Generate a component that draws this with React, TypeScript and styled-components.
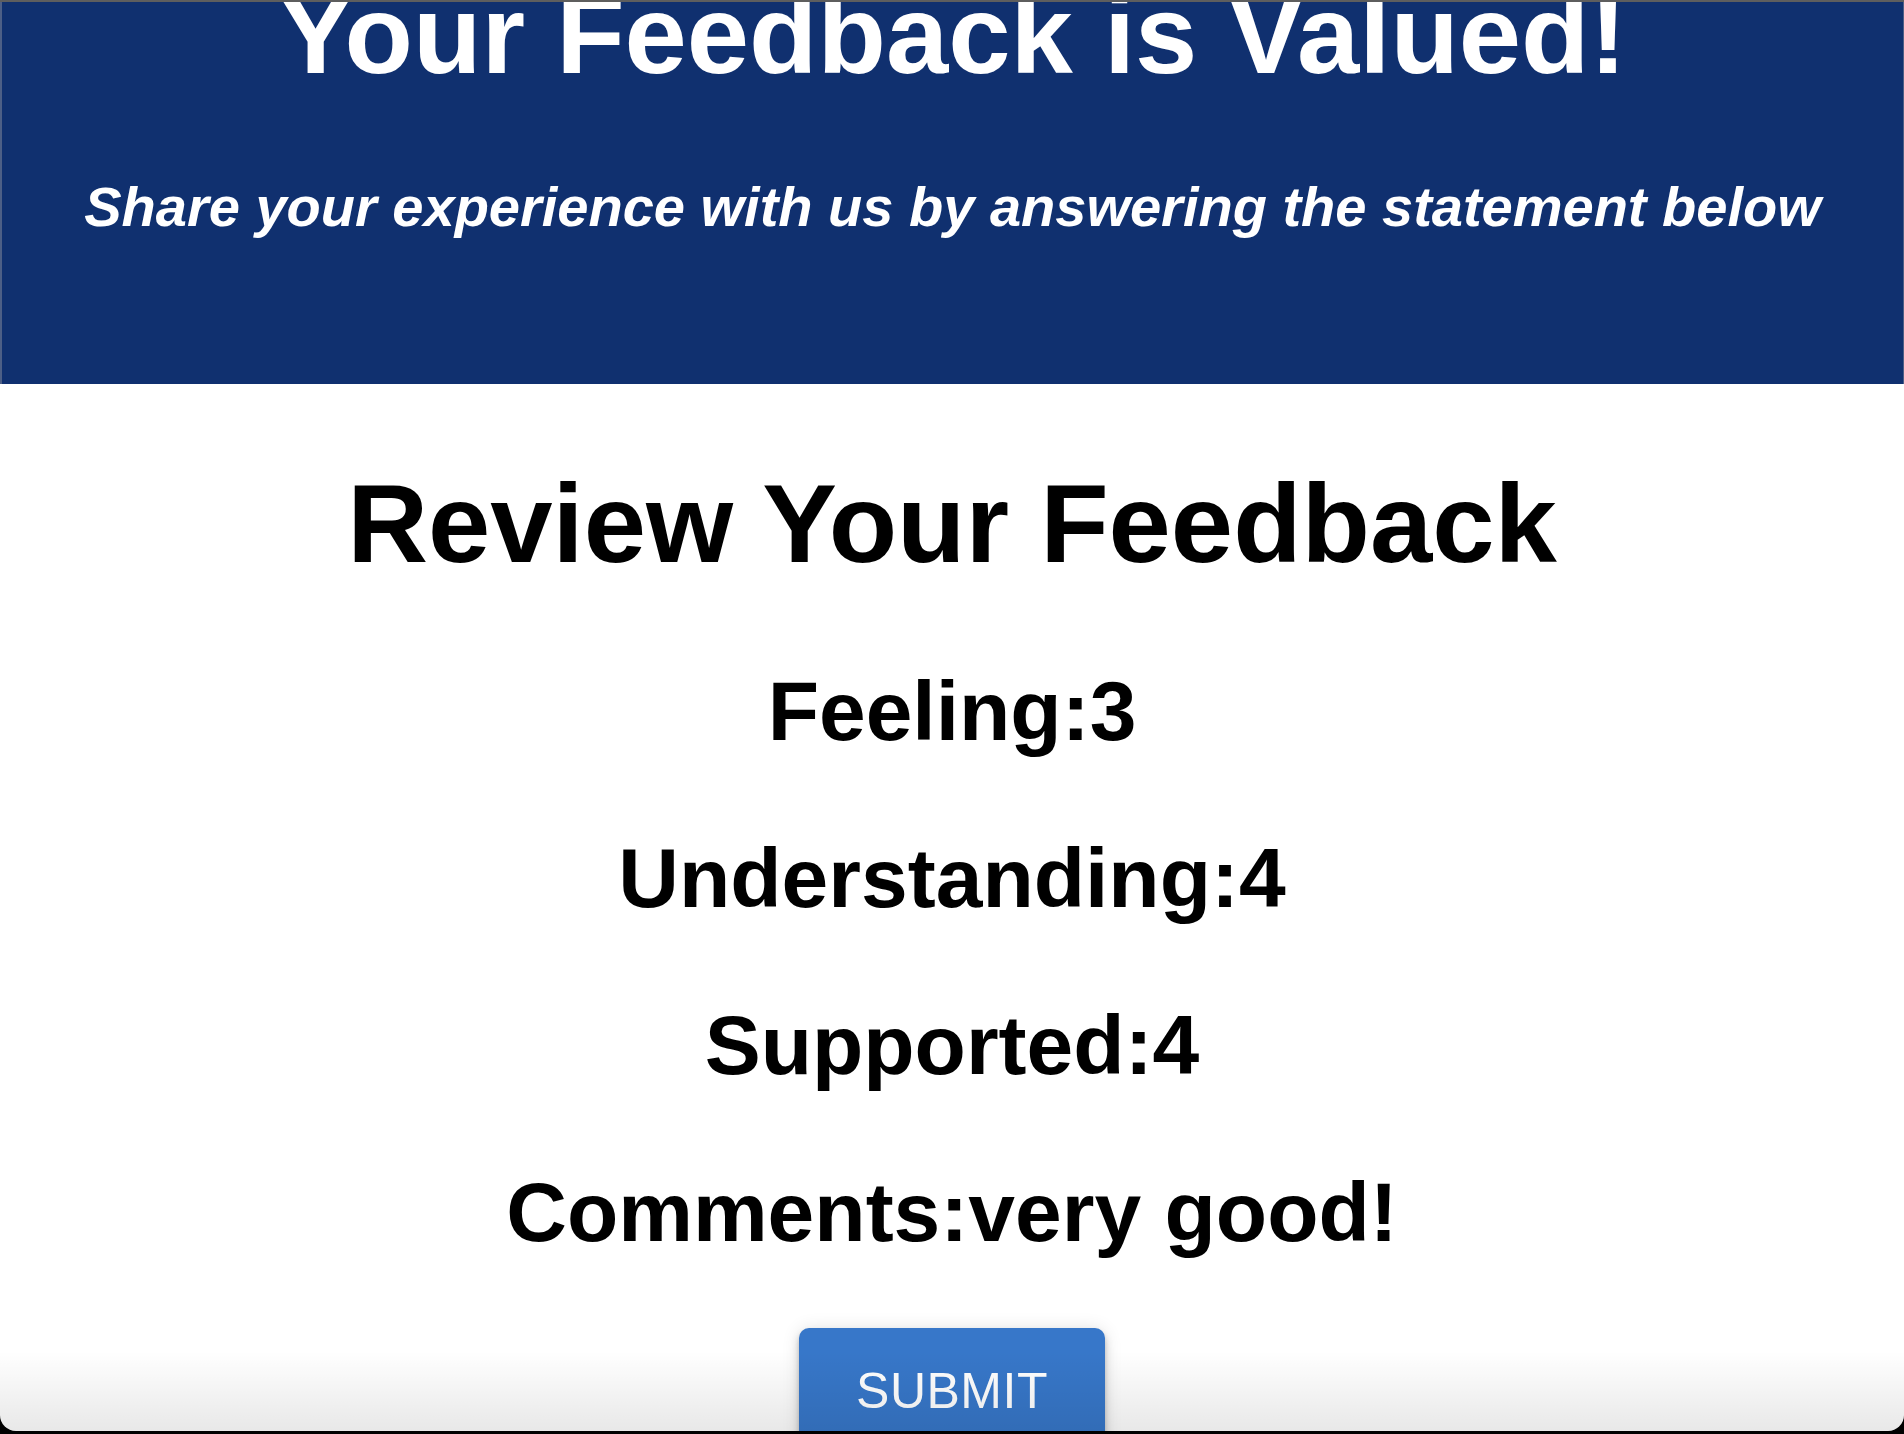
import React from 'react';
import styled, { createGlobalStyle } from 'styled-components';

const GlobalStyle = createGlobalStyle`
  html, body {
    margin: 0;
    padding: 0;
    background: #000;
  }
  body {
    font-family: 'Liberation Sans', Arial, Helvetica, sans-serif;
  }
`;

interface ReviewItem {
  label: string;
  value: string | number;
}

const items: ReviewItem[] = [
  { label: 'Feeling', value: 3 },
  { label: 'Understanding', value: 4 },
  { label: 'Supported', value: 4 },
  { label: 'Comments', value: 'very good!' },
];

const App: React.FC = () => {
  return (
    <>
      <GlobalStyle />
      <Screen>
        <Window>
          <Header>
            <Title>Your Feedback is Valued!</Title>
            <Subtitle>Share your experience with us by answering the statement below</Subtitle>
          </Header>
          <Main>
            <ReviewTitle>Review Your Feedback</ReviewTitle>
            <ItemList>
              {items.map((item) => (
                <Item key={item.label}>
                  {item.label}:{item.value}
                </Item>
              ))}
            </ItemList>
            <SubmitButton type="button">SUBMIT</SubmitButton>
          </Main>
          <BottomShade />
        </Window>
      </Screen>
    </>
  );
};

const Screen = styled.div`
  width: 1904px;
  height: 1434px;
  background: #000;
  overflow: hidden;
`;

const Window = styled.div`
  position: relative;
  width: 1904px;
  height: 1431px;
  background: #fff;
  border-top: 2px solid #5e5e5e;
  box-sizing: border-box;
  border-radius: 0 0 16px 16px;
  overflow: hidden;
  display: flex;
  flex-direction: column;
`;

const Header = styled.header`
  flex-shrink: 0;
  background: #10306f;
  height: 382px;
  box-sizing: border-box;
  border-left: 2px solid #4d5f86;
  border-right: 1px solid #4d5f86;
  display: flex;
  flex-direction: column;
  align-items: center;
  color: #fff;
  overflow: hidden;
`;

const Title = styled.h1`
  margin: -23px 0 0;
  font-size: 112px;
  line-height: 1;
  font-weight: 700;
  white-space: nowrap;
`;

const Subtitle = styled.h2`
  margin: 88px 0 0;
  font-size: 56px;
  line-height: 1;
  font-weight: 700;
  font-style: italic;
  white-space: nowrap;
`;

const Main = styled.main`
  flex-shrink: 0;
  display: flex;
  flex-direction: column;
  align-items: center;
  padding-top: 84px;
  color: #000;
`;

const ReviewTitle = styled.h2`
  margin: 0;
  font-size: 112px;
  line-height: 1;
  font-weight: 700;
  white-space: nowrap;
`;

const ItemList = styled.div`
  display: flex;
  flex-direction: column;
  align-items: center;
  gap: 83px;
  margin-top: 89px;
`;

const Item = styled.h3`
  margin: 0;
  font-size: 84px;
  line-height: 1;
  font-weight: 700;
  white-space: nowrap;
`;

const SubmitButton = styled.button`
  margin-top: 74px;
  width: 306px;
  padding: 38px 0 40px;
  border: none;
  border-radius: 10px;
  background: #3777c9;
  color: #ffffff;
  font-family: 'Liberation Sans', Arial, Helvetica, sans-serif;
  font-size: 50px;
  line-height: 1;
  letter-spacing: 0.5px;
  cursor: pointer;
  box-shadow: 0 3px 5px -1px rgba(0, 0, 0, 0.2), 0 6px 10px 0 rgba(0, 0, 0, 0.14),
    0 1px 18px 0 rgba(0, 0, 0, 0.12);
`;

const BottomShade = styled.div`
  position: absolute;
  left: 0;
  right: 0;
  bottom: 0;
  height: 80px;
  pointer-events: none;
  background: linear-gradient(to bottom, rgba(0, 0, 0, 0), rgba(0, 0, 0, 0.09));
`;

export default App;
